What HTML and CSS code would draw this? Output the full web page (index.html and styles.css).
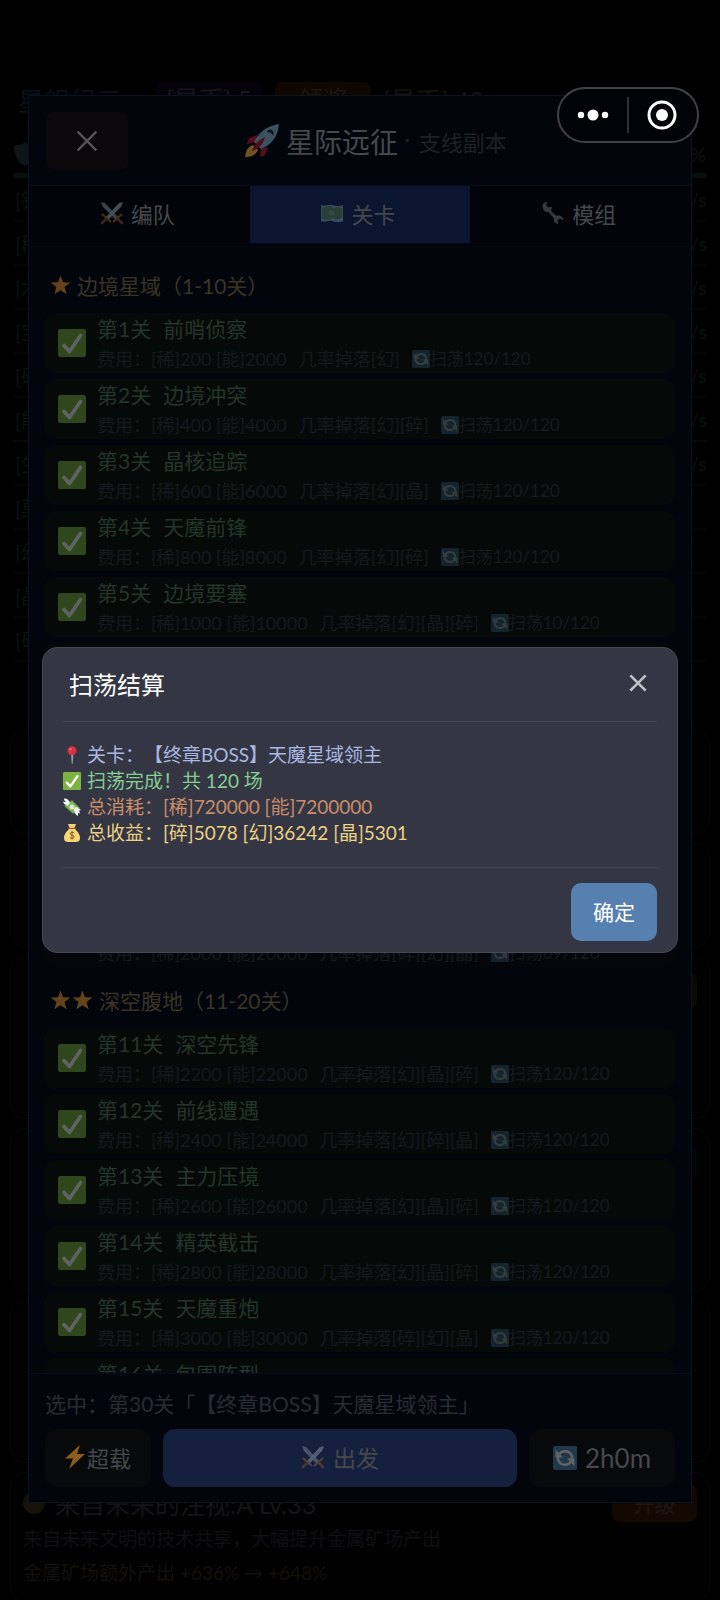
FILE: index.html
```
<!DOCTYPE html>
<html lang="zh-CN">
<head>
<meta charset="utf-8">
<meta name="viewport" content="width=device-width, initial-scale=1">
<title>星际远征</title>
<link rel="stylesheet" href="styles.css">
</head>
<body>
<svg class="sprite" aria-hidden="true">
  <symbol id="i-check" viewBox="0 0 28 28"><rect width="28" height="28" rx="2" fill="#7cb342"/><path d="M6 16.500l5.500 6L22.500 6.500" fill="none" stroke="#fff" stroke-width="3.600" stroke-linecap="round" stroke-linejoin="round"/></symbol>
  <symbol id="i-sync" viewBox="0 0 24 24"><rect width="24" height="24" rx="2" fill="#4a8cc0"/><path d="M5.500 9.500A7.200 7.200 0 0 1 19 10.500V14" fill="none" stroke="#fff" stroke-width="2.600"/><path d="M18.500 14.500A7.200 7.200 0 0 1 5 13.500V11" fill="none" stroke="#fff" stroke-width="2.600"/><path d="M2.500 3.500v8H10zM21.500 20.500v-8H14z" fill="#fff"/></symbol>
  <symbol id="i-swords" viewBox="0 0 24 24"><path d="M1 1l4 1 14 15-2.500 2.500L3 6z" fill="#9fb4bd"/><path d="M23 1l-4 1L5 17l2.500 2.500L21 6z" fill="#bccbd2"/><path d="M2.500 13.500l8 7M21.500 13.500l-8 7" stroke="#c77b35" stroke-width="2" stroke-linecap="round"/><path d="M6 18l-4 4M18 18l4 4" stroke="#a85f2c" stroke-width="2.600" stroke-linecap="round"/></symbol>
  <symbol id="i-map" viewBox="0 0 24 20"><path d="M1 2c4 2 7-1 11 0s7 2 11 0v16c-4 2-7 1-11 0s-7 2-11 0z" fill="#8fb0a8"/><path d="M2 4c3 1 6-2 9-1l3 2 4-1 4 1v10l-5 2-4-2-4 2-7-1z" fill="#5b8a45"/><path d="M10 7l4 1 1 4-4 1-3-2z" fill="#7fa35a"/></symbol>
  <symbol id="i-wrench" viewBox="0 0 24 24"><path d="M2 7C.5 3.500 3 .7 6.500 1L5 4l2 2.500 3.500-1C11 8 10.500 9 10 10l5.500 5c3-1.500 7 1 7 4.500L19 17.500 16.500 19l1 4c-3.500 0-5.500-3-4.500-5.500L7.500 11C5 12 2.500 10 2 7z" fill="#909ba2"/></symbol>
  <symbol id="i-rocket" viewBox="0 0 35 35"><path d="M12 12L4 15l-2 6 8-2zM23 24l-3 8-5 2 1-8z" fill="#c5172f"/><path d="M8 22c-6 2-7 6-8 12 6 0 11-2 13-7z" fill="#fbb03b"/><path d="M34 1C21 3 13 10 9 19l7 7C26 22 33 14 34 1z" fill="#82aec0"/><path d="M23 7c4-2 7 2 5 6-1-3-3-4-6-4z" fill="#1d2a31"/><path d="M20 14C12 18 9 22 7 28c6-2 11-6 13-14z" fill="#a61932"/></symbol>
  <symbol id="i-star" viewBox="0 0 20 20"><path d="M10 .4l2.500 6.900 7.300.2-5.700 4.600 2 7.200L10 15.200l-6.100 4.100 2-7.200L.2 7.500l7.300-.2z" fill="#f5a030"/></symbol>
  <symbol id="i-bolt" viewBox="0 0 20 24"><path d="M15 0L0 13.500h8L4 24 20 9h-8z" fill="#f8a52c"/></symbol>
  <symbol id="i-pin" viewBox="0 0 18 18"><path d="M8 8h2.400L9.600 18h-.8z" fill="#90a4ae"/><circle cx="9" cy="4.800" r="4.500" fill="#d9313d"/><circle cx="7.600" cy="3.300" r="1.200" fill="#ee6a6e"/></symbol>
  <symbol id="i-cash" viewBox="0 0 18 18"><path d="M1 8l8-6 8 8-7 6z" fill="#558b3f"/><path d="M2 8l7-5 7 7-6 5z" fill="#7fb956"/><circle cx="9" cy="9" r="2.500" fill="#dce9cf"/><path d="M7 5C6 1 3 0 1 .500c0 2 1 3 2 3.500-1 0-2 0-3-.500.500 2.500 3 4 5 4zM11 12c0-2 1-3 3-3l4 3c-1 .500-2 .500-2 .500l1 3-2-.500v3c-2-1-4-3-4-6z" fill="#f3f5f6"/></symbol>
  <symbol id="i-bag" viewBox="0 0 18 18"><path d="M5 0h8l-1.500 4h-5z" fill="#f6cf72"/><path d="M6 5h6c2 2 5 5 5 9 0 3-2 4-4 4H5c-2 0-4-1-4-4 0-4 3-7 5-9z" fill="#f9d675"/><path d="M5.500 4.500h7" stroke="#9a6a31" stroke-width="1.300"/><path d="M11.200 9c-.8-1-4-1.200-4 .7 0 2 4 1 4 3.200 0 2-3.500 1.700-4.500.5M9 7v8.500" fill="none" stroke="#7c5b2e" stroke-width="1"/></symbol>
  <symbol id="i-x" viewBox="0 0 20 20"><path d="M1.500 1.500l17 17M18.500 1.500l-17 17" fill="none" stroke="currentColor"/></symbol>
  <symbol id="i-shield" viewBox="0 0 22 24"><path d="M11 0c3 3 7 3 11 3 0 10-3 17-11 21C3 20 0 13 0 3c4 0 8 0 11-3z" fill="#0c1518"/></symbol>
</svg>

<main class="base">
  <header class="base-top">
    <span class="base-name">星舰纪元</span>
    <span class="chip chip-purple">[星币] 5</span>
    <span class="chip chip-orange">领奖</span>
    <span class="coin">[星币] 48</span>
  </header>
  <div class="health"><svg class="shield"><use href="#i-shield"/></svg><span>%</span></div>
  <div class="health-bar"></div>
  <ul class="resources">
    <li><span>[铁]</span><span>/s</span></li>
    <li><span>[稀]</span><span>/s</span></li>
    <li><span>[木]</span><span>/s</span></li>
    <li><span>[宝]</span><span>/s</span></li>
    <li><span>[碎]</span><span>/s</span></li>
    <li class="warm"><span>[能]</span><span>/s</span></li>
    <li><span>[生]</span><span>/s</span></li>
    <li><span>[莫]</span></li>
    <li><span>[幻]</span></li>
    <li><span>[晶]</span></li>
    <li><span>[碎]</span></li>
  </ul>
  <section class="cards">
    <article class="card card-s"></article>
    <article class="card card-s"></article>
    <article class="card card-l"><span class="tag tag-gold"></span></article>
    <article class="card card-l"><span class="tag tag-blue"></span></article>
    <article class="card card-l"></article>
    <article class="card card-last">
      <div class="card-head"><span class="orb"></span><h3>来自未来的注视:A Lv.33</h3><button class="upgrade" type="button">升级</button></div>
      <p>来自未来文明的技术共享，大幅提升金属矿场产出</p>
      <p class="gain">金属矿场额外产出 +636% → +648%</p>
    </article>
  </section>
</main>

<section class="panel">
  <header class="panel-head">
    <button class="panel-close" type="button" aria-label="关闭"><svg><use href="#i-x"/></svg></button>
    <h1><svg class="rocket dim"><use href="#i-rocket"/></svg>星际远征<small><i>·</i>支线副本</small></h1>
  </header>
  <nav class="tabs">
    <button type="button"><svg class="ic dim"><use href="#i-swords"/></svg>编队</button>
    <button type="button" class="active"><svg class="ic dim"><use href="#i-map"/></svg>关卡</button>
    <button type="button"><svg class="ic dim"><use href="#i-wrench"/></svg>模组</button>
  </nav>
  <div class="list">
    <h2><svg class="star dim"><use href="#i-star"/></svg><span>边境星域（1-10关）</span></h2>
    <ul class="stages">
      <li class="stage"><svg class="tick dim"><use href="#i-check"/></svg><div><p class="name"><span>第1关</span><span>前哨侦察</span></p><p class="cost"><span>费用：[稀]200 [能]2000</span><span>几率掉落[幻]</span><span class="sweep"><svg class="dim"><use href="#i-sync"/></svg>扫荡120/120</span></p></div></li>
      <li class="stage"><svg class="tick dim"><use href="#i-check"/></svg><div><p class="name"><span>第2关</span><span>边境冲突</span></p><p class="cost"><span>费用：[稀]400 [能]4000</span><span>几率掉落[幻][碎]</span><span class="sweep"><svg class="dim"><use href="#i-sync"/></svg>扫荡120/120</span></p></div></li>
      <li class="stage"><svg class="tick dim"><use href="#i-check"/></svg><div><p class="name"><span>第3关</span><span>晶核追踪</span></p><p class="cost"><span>费用：[稀]600 [能]6000</span><span>几率掉落[幻][晶]</span><span class="sweep"><svg class="dim"><use href="#i-sync"/></svg>扫荡120/120</span></p></div></li>
      <li class="stage"><svg class="tick dim"><use href="#i-check"/></svg><div><p class="name"><span>第4关</span><span>天魔前锋</span></p><p class="cost"><span>费用：[稀]800 [能]8000</span><span>几率掉落[幻][碎]</span><span class="sweep"><svg class="dim"><use href="#i-sync"/></svg>扫荡120/120</span></p></div></li>
      <li class="stage"><svg class="tick dim"><use href="#i-check"/></svg><div><p class="name"><span>第5关</span><span>边境要塞</span></p><p class="cost"><span>费用：[稀]1000 [能]10000</span><span>几率掉落[幻][晶][碎]</span><span class="sweep"><svg class="dim"><use href="#i-sync"/></svg>扫荡10/120</span></p></div></li>
      <li class="stage"></li>
      <li class="stage"></li>
      <li class="stage"></li>
      <li class="stage"></li>
      <li class="stage plain"><svg class="tick dim"><use href="#i-check"/></svg><div><p class="name"></p><p class="cost"><span>费用：[稀]2000 [能]20000</span><span>几率掉落[碎][幻][晶]</span><span class="sweep"><svg class="dim"><use href="#i-sync"/></svg>扫荡69/120</span></p></div></li>
    </ul>
    <h2><svg class="star dim"><use href="#i-star"/></svg><svg class="star dim"><use href="#i-star"/></svg><span>深空腹地（11-20关）</span></h2>
    <ul class="stages">
      <li class="stage"><svg class="tick dim"><use href="#i-check"/></svg><div><p class="name"><span>第11关</span><span>深空先锋</span></p><p class="cost"><span>费用：[稀]2200 [能]22000</span><span>几率掉落[幻][晶][碎]</span><span class="sweep"><svg class="dim"><use href="#i-sync"/></svg>扫荡120/120</span></p></div></li>
      <li class="stage"><svg class="tick dim"><use href="#i-check"/></svg><div><p class="name"><span>第12关</span><span>前线遭遇</span></p><p class="cost"><span>费用：[稀]2400 [能]24000</span><span>几率掉落[幻][碎][晶]</span><span class="sweep"><svg class="dim"><use href="#i-sync"/></svg>扫荡120/120</span></p></div></li>
      <li class="stage"><svg class="tick dim"><use href="#i-check"/></svg><div><p class="name"><span>第13关</span><span>主力压境</span></p><p class="cost"><span>费用：[稀]2600 [能]26000</span><span>几率掉落[幻][晶][碎]</span><span class="sweep"><svg class="dim"><use href="#i-sync"/></svg>扫荡120/120</span></p></div></li>
      <li class="stage"><svg class="tick dim"><use href="#i-check"/></svg><div><p class="name"><span>第14关</span><span>精英截击</span></p><p class="cost"><span>费用：[稀]2800 [能]28000</span><span>几率掉落[幻][晶][碎]</span><span class="sweep"><svg class="dim"><use href="#i-sync"/></svg>扫荡120/120</span></p></div></li>
      <li class="stage"><svg class="tick dim"><use href="#i-check"/></svg><div><p class="name"><span>第15关</span><span>天魔重炮</span></p><p class="cost"><span>费用：[稀]3000 [能]30000</span><span>几率掉落[碎][幻][晶]</span><span class="sweep"><svg class="dim"><use href="#i-sync"/></svg>扫荡120/120</span></p></div></li>
      <li class="stage"><svg class="tick dim"><use href="#i-check"/></svg><div><p class="name"><span>第16关</span><span>包围阵型</span></p><p class="cost"></p></div></li>
    </ul>
  </div>
  <footer class="panel-foot">
    <p>选中：第30关「【终章BOSS】天魔星域领主」</p>
    <div class="actions">
      <button type="button" class="over"><svg class="bolt dim"><use href="#i-bolt"/></svg>超载</button>
      <button type="button" class="go"><svg class="ic dim"><use href="#i-swords"/></svg>出发</button>
      <button type="button" class="time"><svg class="ic dim"><use href="#i-sync"/></svg>2h0m</button>
    </div>
  </footer>
</section>

<div class="modal-layer">
  <section class="modal" role="dialog" aria-labelledby="dlg-title">
    <header><h2 id="dlg-title">扫荡结算</h2><button type="button" class="modal-close" aria-label="关闭"><svg><use href="#i-x"/></svg></button></header>
    <ul class="result">
      <li class="r-stage"><svg><use href="#i-pin"/></svg>关卡：【终章BOSS】天魔星域领主</li>
      <li class="r-done"><svg><use href="#i-check"/></svg>扫荡完成！共 120 场</li>
      <li class="r-cost"><svg><use href="#i-cash"/></svg>总消耗：[稀]720000 [能]7200000</li>
      <li class="r-gain"><svg><use href="#i-bag"/></svg>总收益：[碎]5078 [幻]36242 [晶]5301</li>
    </ul>
    <footer><button type="button" class="ok">确定</button></footer>
  </section>
</div>

<div class="capsule">
  <button type="button" aria-label="更多"><svg class="dots" viewBox="0 0 32 12"><circle cx="4" cy="6" r="3.200" fill="#fff"/><circle cx="16" cy="6" r="5.500" fill="#fff"/><circle cx="28" cy="6" r="3.200" fill="#fff"/></svg></button>
  <button type="button" aria-label="退出"><svg class="ring" viewBox="0 0 30 30"><circle cx="15" cy="15" r="13" fill="none" stroke="#fff" stroke-width="3"/><circle cx="15" cy="15" r="6" fill="#fff"/></svg></button>
</div>
</body>
</html>
```

FILE: styles.css
```
* { box-sizing: border-box; }
body {
  margin: 0;
  height: 100vh;
  overflow: hidden;
  background: #000;
  color: #46484c;
  font-family: Lato, "Noto Sans CJK SC", sans-serif;
  text-spacing-trim: space-all;
}
h1, h2, h3, p, ul { margin: 0; padding: 0; font-weight: 400; }
ul { list-style: none; }
button { margin: 0; padding: 0; border: 0; background: none; color: inherit; font: inherit; }
svg { display: block; flex: none; }
.sprite { position: absolute; width: 0; height: 0; }
.dim { opacity: .36; }

/* page under the panel */
.base { display: flex; flex-direction: column; padding: 82px 10px 0; color: #101214; }
.base-top { display: flex; align-items: center; height: 34px; padding-left: 8px; font-size: 25px; }
.base-name { width: 137px; font-size: 26px; color: #08101a; }
.chip { height: 34px; line-height: 34px; border-radius: 8px; text-align: center; }
.chip-purple { width: 108px; background: #05030a; color: #181320; }
.chip-orange { width: 96px; margin-left: 12px; background: #100701; color: #1c160f; }
.coin { margin-left: 12px; color: #15140f; }
.health { display: flex; justify-content: space-between; align-items: center; height: 57px; padding: 18px 4px 0; font-size: 20px; }
.shield { width: 22px; height: 24px; }
.health-bar { height: 5px; margin: 0 3px; border-radius: 3px; background: #08100c; }
.resources { margin: 0 3px; }
.resources li { display: flex; justify-content: space-between; align-items: center; height: 44px; padding-left: 2px; border-bottom: 2px solid #040506; font-size: 20px; color: #0c1112; }
.resources .warm { border-color: #0d0803; }
.cards { display: flex; flex-direction: column; gap: 9px; padding-top: 68px; }
.card { flex: none; display: flex; flex-direction: column; border: 1px solid #06070a; border-radius: 14px; background: #010102; }
.card-s { height: 104px; }
.card-l { height: 163px; align-items: flex-end; padding: 16px 12px; }
.tag { width: 84px; height: 36px; border-radius: 8px; }
.tag-gold { background: #0b0802; }
.tag-blue { background: #03030b; }
.card-last { padding: 11px 12px; }
.card-head { display: flex; align-items: center; gap: 10px; height: 38px; }
.card-head h3 { flex: 1; font-size: 25px; color: #141518; }
.orb { width: 22px; height: 22px; border-radius: 50%; background: #151308; }
.upgrade { width: 85px; height: 38px; border-radius: 8px; background: #140802; color: #1d1712; font-size: 21px; }
.card-last p { font-size: 19px; line-height: 34px; color: #0f1013; }
.card-last .gain { color: #14100a; }

/* expedition panel */
.panel {
  position: fixed;
  inset: 95px 28px 97px;
  display: flex;
  flex-direction: column;
  border: 1px solid #0a1220;
  background: #03050d;
}
.panel-head { display: grid; grid-template-columns: 82px 1fr 50px; align-items: center; height: 90px; padding: 0 17px; border-bottom: 1px solid #080c17; }
.panel-close { display: grid; place-items: center; height: 58px; border-radius: 8px; background: #0b080b; color: #55565a; }
.panel-close svg { width: 22px; height: 22px; stroke-width: 2; }
.panel h1 { display: flex; justify-content: center; align-items: center; gap: 6px; font-size: 28px; white-space: nowrap; }
.panel h1 small { display: flex; gap: 9px; font-size: 22px; color: #1e2126; }
.panel h1 i { font-style: normal; }
.rocket { width: 35px; height: 35px; opacity: .45; }
.tabs { display: grid; grid-template-columns: repeat(3, 1fr); height: 58px; background: #020409; border-bottom: 1px solid #050812; font-size: 22px; }
.tabs button { display: flex; justify-content: center; align-items: center; gap: 7px; padding: 0 4px 4px 0; }
.tabs .active { background: #0b1530; }
.ic { width: 24px; height: 24px; }
.list { flex: 1; min-height: 0; overflow: hidden; padding: 8px 16px 0 15px; }
.list h2 { display: flex; align-items: center; gap: 1px; height: 61px; padding: 5px 0 0 6px; font-size: 21px; color: #3b3424; }
.list h2 span { margin-left: 5px; }
.star { width: 21px; height: 20px; opacity: .4; }
.stages { display: flex; flex-direction: column; gap: 6px; }
.stage { display: flex; align-items: center; gap: 11px; height: 60px; padding-left: 14px; border-radius: 12px; background: #050a09; }
.stage.plain { background: #04060a; }
.tick { width: 28px; height: 28px; }
.name { display: flex; gap: 12px; height: 31px; line-height: 31px; font-size: 21px; color: #24352a; }
.cost { display: flex; gap: 12px; height: 29px; line-height: 30px; font-size: 18px; color: #14191d; white-space: nowrap; }
.sweep { display: flex; align-items: center; font-size: 17px; }
.sweep svg { width: 18px; height: 18px; opacity: .2; }
.panel-foot { padding: 11px 16px 15px; border-top: 1px solid #080c17; background: #03050c; }
.panel-foot p { height: 44px; line-height: 38px; font-size: 21px; color: #292c34; }
.actions { display: grid; grid-template-columns: 106px 1fr 146px; gap: 12px; height: 58px; font-size: 23px; }
.actions button { display: flex; justify-content: center; align-items: center; gap: 8px; padding-bottom: 3px; border-radius: 12px; background: #08090b; }
.actions .over { gap: 2px; font-size: 22px; }
.actions .go { background: #14203d; }
.actions .time { padding: 0; font-size: 26px; }
.bolt { width: 20px; height: 24px; opacity: .55; }

/* result dialog */
.modal-layer { position: fixed; inset: 0; display: flex; align-items: center; padding: 0 42px; }
.modal { flex: 1; padding: 0 20px 11px; border: 1px solid #464853; border-radius: 15px; background: #343644; }
.modal header { display: flex; justify-content: space-between; align-items: center; height: 74px; padding: 0 10px 3px 6px; border-bottom: 1px solid #454755; color: #fff; }
.modal h2 { font-size: 24px; }
.modal-close { color: #bfc0c5; }
.modal-close svg { width: 18px; height: 18px; stroke-width: 3; }
.result { padding: 20px 0 21px; font-size: 19px; line-height: 26px; }
.result li { display: flex; align-items: center; gap: 6px; }
.result svg { width: 18px; height: 18px; }
.r-stage { color: #a8b8e0; }
.r-done { color: #85cd91; }
.r-cost { color: #c98d68; }
.r-gain { color: #ecd083; }
.modal footer { display: flex; justify-content: flex-end; padding-top: 15px; border-top: 1px solid #454755; }
.ok { width: 86px; height: 58px; padding-bottom: 3px; border-radius: 10px; background: #5680b0; color: #fff; font-size: 21px; }

/* host capsule */
.capsule { position: fixed; top: 87px; right: 21px; display: grid; grid-template-columns: 1fr 1fr; align-items: center; width: 142px; height: 56px; padding-right: 2px; border: 2px solid #424246; border-radius: 28px; background: #020307; }
.capsule button { display: grid; place-items: center; height: 36px; }
.capsule button + button { border-left: 2px solid #303035; }
.dots { width: 32px; height: 12px; }
.ring { width: 30px; height: 30px; }
```
